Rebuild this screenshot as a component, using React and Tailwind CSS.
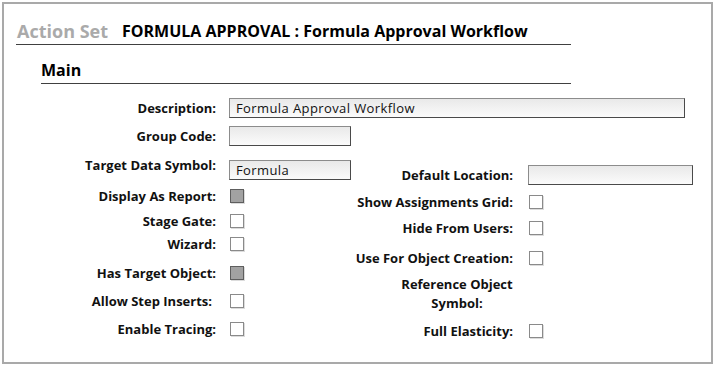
import React from 'react';

const font = { fontFamily: '"Open Sans", Lato, sans-serif' };

const TextBox = ({ value = '', className = '' }) => (
  <div
    className={`h-[20px] shrink-0 border border-[#8c8c8c] border-r-[#4a4a4a] border-b-[#4a4a4a] bg-gradient-to-b from-[#e9e9e9] to-[#fbfbfb] px-[6px] text-[13px] leading-[18px] tracking-[0.4px] text-[#111] ${className}`}
  >
    {value}
  </div>
);

const Check = ({ filled = false }) => (
  <div
    className={`h-[14px] w-[14px] border shadow-[1px_1px_0_#dcdcdc] ${
      filled ? 'border-[#5e5e5e] bg-[#a2a2a2]' : 'border-[#8a8a8a] bg-white'
    }`}
  />
);

const Label = ({ children, className = '' }) => (
  <div className={`shrink-0 whitespace-nowrap text-right text-[13px] font-bold leading-[16px] text-[#111] ${className}`}>
    {children}
  </div>
);

// row heights tuned so the centres sit where the original form puts them
const leftRows = [
  { label: 'Display As Report:', filled: true, h: 'h-[26px]' },
  { label: 'Stage Gate:', h: 'h-[24px]' },
  { label: 'Wizard:', h: 'h-[21px]' },
  { label: 'Has Target Object:', filled: true, h: 'h-[37px]' },
  { label: 'Allow Step Inserts:', h: 'h-[19px]', pad: 'pr-[4px]' },
  { label: 'Enable Tracing:', h: 'h-[37px]' },
];

const rightRows = [
  { label: 'Show Assignments Grid:', h: 'h-[28px]' },
  { label: 'Hide From Users:', h: 'h-[24px]' },
  { label: 'Use For Object Creation:', h: 'h-[35px]' },
];

export default function App() {
  return (
    <div className="h-[366px] w-[715px] bg-white p-[2px]" style={font}>
      <div className="h-[362px] w-[711px] border-2 border-[#a9a9a9] bg-white">
        {/* Header */}
        <div className="ml-[12px] mt-[14px] flex h-[27px] w-[555px] items-center gap-[14px] border-b border-[#404040] pl-[1px]">
          <span className="text-[18px] font-bold text-[#aaaaaa]">Action Set</span>
          <span className="text-[16px] font-bold text-black">FORMULA APPROVAL : Formula Approval Workflow</span>
        </div>

        {/* Section */}
        <div className="ml-[37px] mt-[11px] flex h-[28px] w-[530px] items-center border-b border-[#404040]">
          <span className="text-[16px] font-bold text-black">Main</span>
        </div>

        <div className="ml-[37px] mt-[11px]">
          <div className="flex h-[25px] items-center gap-[13px]">
            <Label className="w-[175px]">Description:</Label>
            <TextBox value="Formula Approval Workflow" className="w-[456px]" />
          </div>
          <div className="flex h-[31px] items-center gap-[13px]">
            <Label className="w-[175px]">Group Code:</Label>
            <TextBox className="w-[122px]" />
          </div>

          <div className="mt-[6px] flex">
            {/* Left column */}
            <div className="w-[312px] shrink-0">
              <div className="flex h-[26px] items-start gap-[13px]">
                <Label className="w-[175px]">Target Data Symbol:</Label>
                <TextBox value="Formula" className="mt-[3px] w-[122px]" />
              </div>
              {leftRows.map((r) => (
                <div key={r.label} className={`flex ${r.h} items-center gap-[13px]`}>
                  <Label className={`w-[175px] ${r.pad || ''}`}>{r.label}</Label>
                  <div className="pl-[1px]">
                    <Check filled={r.filled} />
                  </div>
                </div>
              ))}
            </div>

            {/* Right column */}
            <div className="mt-[4px]">
              <div className="flex h-[27px] items-center gap-[15px]">
                <Label className="w-[160px]">Default Location:</Label>
                <TextBox className="w-[165px]" />
              </div>
              {rightRows.map((r) => (
                <div key={r.label} className={`flex ${r.h} items-center gap-[15px]`}>
                  <Label className="w-[160px]">{r.label}</Label>
                  <div className="pl-[1px]">
                    <Check />
                  </div>
                </div>
              ))}
              <div className="flex h-[37px] items-center">
                <div className="ml-[44px] w-[120px] text-center text-[13px] font-bold leading-[19px] text-[#111]">
                  Reference Object Symbol:
                </div>
              </div>
              <div className="flex h-[38px] items-center gap-[15px]">
                <Label className="w-[160px]">Full Elasticity:</Label>
                <div className="pl-[1px]">
                  <Check />
                </div>
              </div>
            </div>
          </div>
        </div>
      </div>
    </div>
  );
}
